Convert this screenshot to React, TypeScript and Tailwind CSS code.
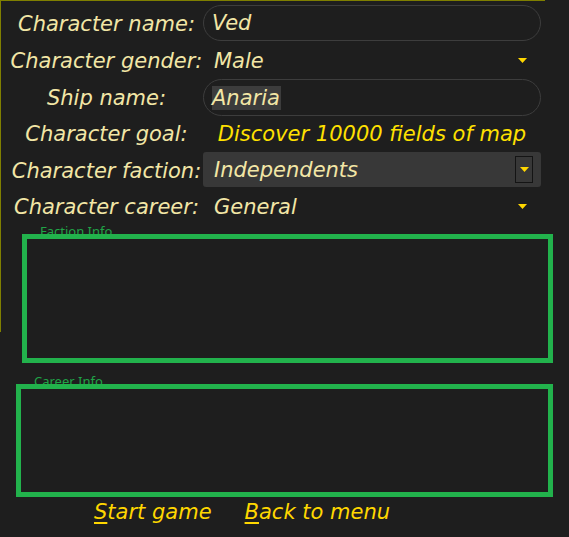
import React from "react";

// character creation form: labels in the left column, fields in the right

const FONT = "font-['DejaVu_Sans',sans-serif] italic";

function Arrow() {
  return (
    <svg width="9" height="5" viewBox="0 0 9 5" className="block">
      <path d="M0 0h9L4.5 5z" fill="#ffd700" />
    </svg>
  );
}

function Row({
  label,
  h,
  children,
}: {
  label: string;
  h: string;
  children: React.ReactNode;
}) {
  return (
    <div className={`flex ${h} items-center`}>
      <div className="w-[193px] text-center pt-[3px] whitespace-nowrap">{label}</div>
      <div className="w-[338px] h-full flex items-center">{children}</div>
    </div>
  );
}

function InfoBox({ title, cls, boxH }: { title: string; cls: string; boxH: string }) {
  return (
    <div className={cls}>
      <div className="font-['Noto_Sans',sans-serif] not-italic text-[13px] leading-[16px] text-[#20a447] mb-[-5px] pl-[18px]">
        {title}
      </div>
      <div className={`relative border-[5px] border-[#22b24c] ${boxH}`} />
    </div>
  );
}

export default function App() {
  return (
    <div
      className={`relative w-[569px] h-[537px] bg-[#1e1e1e] overflow-hidden ${FONT} text-[21px] text-[#f2e6a6]`}
    >
      {/* olive frame of the parent window */}
      <div className="absolute left-0 top-0 w-[545px] h-[332px] border-t border-l border-[#7f7f00] pointer-events-none" />

      <div className="pt-[5px] pl-[10px]">
        <Row label="Character name:" h="h-[37px]">
          <div className="h-[36px] w-full self-start rounded-full border border-[#3d3d3d] flex items-center pl-[8px] pt-[2px]">
            Ved
          </div>
        </Row>
        <Row label="Character gender:" h="h-[37px]">
          <div className="flex w-full items-center justify-between pl-[11px] pr-[14px]">
            <span className="pt-[3px]">Male</span>
            <Arrow />
          </div>
        </Row>
        <Row label="Ship name:" h="h-[36px]">
          <div className="h-[37px] w-full self-start rounded-full border border-[#3d3d3d] flex items-center pl-[8px] pt-[1px]">
            <span className="bg-[#3c3c3c] leading-[24px] pr-[1px]">Anaria</span>
          </div>
        </Row>
        <Row label="Character goal:" h="h-[37px]">
          <div className="w-full text-center text-[#ffe100] pt-[3px] whitespace-nowrap">
            Discover 10000 fields of map
          </div>
        </Row>
        <Row label="Character faction:" h="h-[36px]">
          <div className="h-[35px] w-full self-start rounded-[3px] bg-[#383838] flex items-center justify-between pl-[11px] pr-[8px]">
            <span className="pt-[2px]">Independents</span>
            <div className="w-[18px] h-[27px] border border-[#141414] flex items-center justify-center">
              <Arrow />
            </div>
          </div>
        </Row>
        <Row label="Character career:" h="h-[36px]">
          <div className="flex w-full items-center justify-between pl-[11px] pr-[14px]">
            <span className="pt-[3px]">General</span>
            <Arrow />
          </div>
        </Row>
      </div>

      <InfoBox title="Faction Info" cls="mt-[-1px] ml-[22px] w-[531px]" boxH="h-[129px]" />
      <InfoBox title="Career Info" cls="mt-[10px] ml-[16px] w-[537px]" boxH="h-[113px]" />

      <div className="flex gap-[33px] pl-[94px] pt-[3px] leading-[24px] text-[#ffd700]">
        <span>
          <span className="underline decoration-2 underline-offset-[3px]">S</span>tart game
        </span>
        <span>
          <span className="underline decoration-2 underline-offset-[3px]">B</span>ack to menu
        </span>
      </div>
    </div>
  );
}
